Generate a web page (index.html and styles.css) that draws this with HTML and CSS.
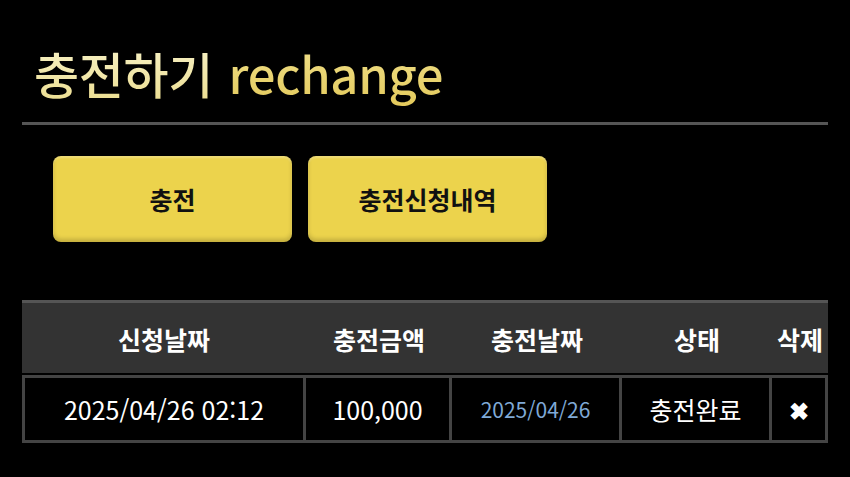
FILE: index.html
```html
<!DOCTYPE html>
<html lang="ko">
<head>
    <meta charset="UTF-8">
    <meta name="viewport" content="width=device-width, initial-scale=1.0">
    <title>충전하기</title>
    <link rel="stylesheet" href="styles.css">
</head>
<body>
    <div class="page">
        <h1 class="title"><span class="title-ko">충전하기</span> <span class="title-en">rechange</span></h1>

        <div class="tabs">
            <button class="tab-btn" type="button">충전</button>
            <button class="tab-btn" type="button">충전신청내역</button>
        </div>

        <table class="history">
            <colgroup>
                <col class="col-req">
                <col class="col-amount">
                <col class="col-date">
                <col class="col-state">
                <col class="col-del">
            </colgroup>
            <thead>
                <tr>
                    <th>신청날짜</th>
                    <th>충전금액</th>
                    <th>충전날짜</th>
                    <th>상태</th>
                    <th>삭제</th>
                </tr>
            </thead>
            <tbody>
                <tr>
                    <td>2025/04/26 02:12</td>
                    <td>100,000</td>
                    <td class="done-date">2025/04/26</td>
                    <td>충전완료</td>
                    <td><span class="del">&#10006;</span></td>
                </tr>
            </tbody>
        </table>
    </div>
</body>
</html>
```

FILE: styles.css
```css
* {
    margin: 0;
    padding: 0;
    box-sizing: border-box;
    font-family: "Noto Sans CJK KR", "Noto Sans", sans-serif;
}

:root {
    --bg-color: #000;
    --line: #555;
    --head-bg: #333;
    --cell-line: #444;
    --btn: #ecd34c;
    --link: #7fa9d6;
}

body {
    background-color: var(--bg-color);
    color: #fff;
}

.page {
    padding: 0 22px;
}

.title {
    font-size: 49px;
    font-weight: 500;
    line-height: 1;
    padding: 48px 0 0 12px;
    height: 125px;
    border-bottom: 3px solid var(--line);
    letter-spacing: -0.3px;
}

.title-ko {
    background: linear-gradient(180deg, #f8f3cc 0%, #ebdc8c 100%);
    -webkit-background-clip: text;
    background-clip: text;
    color: transparent;
}

.title-en {
    background: linear-gradient(180deg, #f1e290 0%, #e3c95a 100%);
    -webkit-background-clip: text;
    background-clip: text;
    color: transparent;
    margin-left: 2px;
}

.tabs {
    display: flex;
    gap: 16px;
    padding: 31px 0 0 31px;
}

.tab-btn {
    width: 239px;
    height: 86px;
    border: none;
    border-radius: 8px;
    background-color: var(--btn);
    box-shadow: inset 0 -3px 4px rgba(0, 0, 0, 0.18), inset 0 2px 2px rgba(255, 255, 255, 0.25);
    color: #111;
    font-size: 25px;
    font-weight: 700;
    cursor: pointer;
}

.history {
    width: 806px;
    margin-top: 58px;
    border-collapse: separate;
    border-spacing: 0;
    table-layout: fixed;
}

.col-req { width: 284px; }
.col-amount { width: 146px; }
.col-date { width: 170px; }
.col-state { width: 150px; }
.col-del { width: 56px; }

.history th {
    height: 75px;
    background-color: var(--head-bg);
    border-top: 3px solid var(--line);
    border-bottom: 2px solid var(--bg-color);
    font-size: 25px;
    font-weight: 700;
    text-align: center;
    padding-top: 2px;
}

.history td {
    height: 68px;
    border-right: 3px solid var(--cell-line);
    border-bottom: 3px solid var(--cell-line);
    border-top: 3px solid var(--cell-line);
    text-align: center;
    font-size: 25px;
    font-weight: 400;
}

.history td:first-child {
    border-left: 3px solid var(--cell-line);
}

.history td.done-date {
    color: var(--link);
    font-size: 21px;
}

.del {
    font-size: 24px;
    font-weight: 700;
}
```
